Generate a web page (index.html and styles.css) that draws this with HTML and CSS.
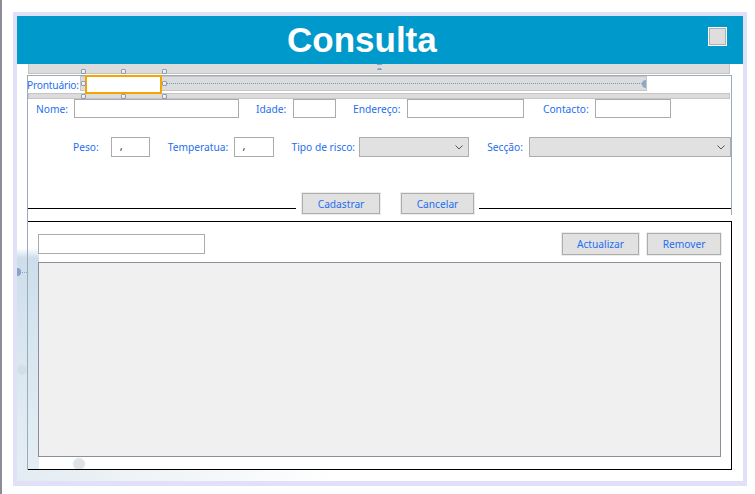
FILE: index.html
```html
<!DOCTYPE html>
<html lang="pt">
<head>
<meta charset="utf-8">
<title>Consulta</title>
<link rel="stylesheet" href="styles.css">
</head>
<body>
<div class="page">
  <div class="frame">
    <div class="inner">
      <span class="side-anchor"></span>
      <header class="header">
        <h1 class="title">Consulta</h1>
        <span class="check"></span>
      </header>
      <div class="topbar"><span class="top-marker"></span></div>
      <div class="designer">
        <section class="form">
          <div class="pront-row">
            <span class="lbl pront-label">Prontuário:</span>
            <div class="strip">
              <div class="sel-input">
                <div class="handles">
                  <span class="h h1"></span><span class="h h2"></span><span class="h h3"></span>
                  <span class="h h4"></span><span class="h h5"></span>
                  <span class="h h6"></span><span class="h h7"></span><span class="h h8"></span>
                </div>
              </div>
              <span class="dotline"></span>
              <span class="knob"></span>
            </div>
          </div>
          <div class="thinbar"></div>

          <div class="row row1">
            <span class="lbl w-nome">Nome:</span>
            <div class="tb w-nome-in"></div>
            <span class="lbl gap17 w-idade">Idade:</span>
            <div class="tb w-idade-in"></div>
            <span class="lbl gap17 w-end">Endereço:</span>
            <div class="tb w-end-in"></div>
            <span class="lbl gap19 w-cont">Contacto:</span>
            <div class="tb w-cont-in"></div>
          </div>

          <div class="row row2">
            <span class="lbl w-peso">Peso:</span>
            <div class="tb w-peso-in"><span class="comma">,</span></div>
            <span class="lbl gap18 w-temp">Temperatua:</span>
            <div class="tb w-temp-in"><span class="comma">,</span></div>
            <span class="lbl gap18 w-risco">Tipo de risco:</span>
            <div class="combo w-risco-in"><svg class="chev" width="8" height="5" viewBox="0 0 8 5"><path d="M0.5 0.5 L4 4 L7.5 0.5" fill="none" stroke="#555" stroke-width="1"/></svg></div>
            <span class="lbl gap18 w-sec">Secção:</span>
            <div class="combo w-sec-in"><svg class="chev" width="8" height="5" viewBox="0 0 8 5"><path d="M0.5 0.5 L4 4 L7.5 0.5" fill="none" stroke="#555" stroke-width="1"/></svg></div>
          </div>

          <div class="row row3">
            <span class="rule rule-left"></span>
            <button class="btn btn-cad">Cadastrar</button>
            <button class="btn btn-can">Cancelar</button>
            <span class="rule rule-right"></span>
          </div>
        </section>

        <section class="box">
          <div class="box-top">
            <div class="tb search"></div>
            <div class="box-actions">
              <button class="btn btn-act">Actualizar</button>
              <button class="btn btn-rem">Remover</button>
            </div>
          </div>
          <div class="grid"></div>
        </section>
      </div>
    </div>
  </div>
</div>
</body>
</html>
```

FILE: styles.css
```css
* { box-sizing: border-box; }

html, body {
  margin: 0;
  padding: 0;
  background: #ffffff;
}

body {
  font-family: "Noto Sans", "DejaVu Sans", sans-serif;
  font-size: 10.2px;
}

.page {
  width: 755px;
  height: 494px;
  border-left: 2px solid #8b8c98;
  padding: 12px 0 0 11px;
}

.frame {
  width: 734px;
  height: 474px;
  border-style: solid;
  border-color: #e0e0f9;
  border-width: 4px 4px 5px 4px;
}

.inner {
  position: relative;
  width: 726px;
  height: 465px;
  background-color: #ffffff;
  background-image:
    radial-gradient(circle at 62px 448px, #dde3e7 0, #dde3e7 5px, rgba(221,227,231,0) 7px),
    radial-gradient(circle at 5px 354px, #d2dfe8 0, #d2dfe8 4px, rgba(210,223,232,0) 6px),
    linear-gradient(to right, #e3ecf2 0, #ffffff 320px),
    linear-gradient(to bottom, rgba(255,255,255,0) 0, rgba(255,255,255,0) 232px, #cddeea 242px, #d8e6ef 330px, #e6eef4 465px);
  background-repeat: no-repeat;
  background-size: auto, auto, 100% 12px, 22px 465px;
  background-position: 0 0, 0 0, 0 453px, 0 0;
}

.side-anchor {
  position: absolute;
  left: 0;
  top: 252px;
  width: 10px;
  height: 8px;
  background: radial-gradient(circle at 0 4px, #8ba3c4 0, #8ba3c4 4px, rgba(0,0,0,0) 4.5px);
}
.side-anchor::after {
  content: "";
  position: absolute;
  left: 5px;
  top: 4px;
  width: 5px;
  border-top: 1px dotted #8ba3c4;
}

/* Header */
.header {
  height: 48px;
  background: #0099cc;
  display: flex;
  align-items: center;
}

.title {
  margin: 0 0 0 270px;
  font-family: "Liberation Sans", Arial, sans-serif;
  font-weight: bold;
  font-size: 35px;
  line-height: 40px;
  color: #ffffff;
}

.check {
  margin-left: auto;
  margin-right: 16px;
  align-self: flex-start;
  margin-top: 11px;
  width: 19px;
  height: 19px;
  border: 1px solid #ffffff;
  box-shadow: inset 0 0 0 1px #b0b0b0;
  background: #dedede;
}

/* design-time bars */
.topbar {
  position: relative;
  margin-left: 11px;
  width: 702px;
  height: 10px;
  background: #dcdcdc;
  border: 1px solid #c4c4c4;
  border-top: none;
}

.top-marker {
  position: absolute;
  left: 348px;
  top: 0;
  width: 5px;
  height: 6px;
  background: radial-gradient(circle at 2.5px 5px, #8ba3c4 0, #8ba3c4 2px, rgba(0,0,0,0) 2.5px);
  border-top: 1px dotted #8ba3c4;
}

.designer {
  margin-top: 1px;
  margin-left: 10px;
  width: 705px;
  border-left: 1px solid #9aacbc;
}

.form {
  border-top: 1px solid #9aacbc;
  border-right: 1px solid #9aacbc;
  padding-bottom: 1px;
}

.lbl {
  color: #1e6ef2;
  white-space: nowrap;
  line-height: 14px;
}

.pront-row {
  display: flex;
  height: 17px;
}

.pront-label {
  width: 53px;
  margin-left: -1px;
  line-height: 17px;
  padding-top: 1px;
  letter-spacing: -0.2px;
}

.strip {
  width: 567px;
  height: 15px;
  background: #dcdcdc;
  border: 1px solid #c6c6c6;
  display: flex;
  align-items: center;
}

.sel-input {
  position: relative;
  align-self: flex-start;
  margin-top: -2px;
  margin-left: 4px;
  width: 77px;
  height: 19px;
  background: #ffffff;
  border: 2px solid #f5a500;
  flex: none;
}

.handles {
  position: absolute;
  left: -6px;
  top: -8px;
  width: 86px;
  height: 31px;
}

.h {
  position: absolute;
  width: 5px;
  height: 5px;
  border: 1px solid #8f9cb0;
  border-radius: 1px;
  background: linear-gradient(135deg, #ffffff, #d8dde6);
}
.h1 { left: 0; top: 0; }
.h2 { left: 40px; top: 0; }
.h3 { left: 81px; top: 0; }
.h4 { left: 0; top: 12px; }
.h5 { left: 81px; top: 12px; }
.h6 { left: 0; top: 25px; }
.h7 { left: 40px; top: 25px; }
.h8 { left: 81px; top: 25px; }

.dotline {
  flex: 1;
  margin-left: 4px;
  border-top: 1px dotted #7396c2;
  height: 0;
}

.knob {
  flex: none;
  width: 4px;
  height: 8px;
  border-radius: 4px 0 0 4px;
  background: #8ea8c6;
}

.thinbar {
  width: 702px;
  height: 6px;
  background: #dcdcdc;
  border: 1px solid #c6c6c6;
}

/* rows */
.row {
  display: flex;
  align-items: center;
}

.row1 { height: 19px; }
.row2 { height: 20px; margin-top: 19px; }
.row3 { height: 21px; margin-top: 36px; align-items: flex-start; }

.tb {
  height: 19px;
  background: #ffffff;
  border: 1px solid #ababab;
  flex: none;
}

.row2 .tb { height: 20px; }

.gap17 { margin-left: 17px; }
.gap18 { margin-left: 18px; }
.gap19 { margin-left: 19px; }

.w-nome { margin-left: 8px; width: 38px; }
.w-nome-in { width: 165px; }
.w-idade { width: 37px; }
.w-idade-in { width: 43px; }
.w-end { width: 54px; }
.w-end-in { width: 117px; }
.w-cont { width: 52px; }
.w-cont-in { width: 76px; }

.w-peso { margin-left: 45px; width: 38px; }
.w-peso-in { width: 39px; }
.w-temp { width: 66px; }
.w-temp-in { width: 40px; }
.w-risco { width: 68px; }
.w-risco-in { width: 110px; }
.w-sec { width: 42px; }
.w-sec-in { width: 202px; }

.comma {
  display: block;
  padding-left: 8px;
  line-height: 16px;
  font-size: 11px;
  color: #333;
}

.combo {
  flex: none;
  height: 20px;
  background: #e1e1e1;
  border: 1px solid #adadad;
  display: flex;
  align-items: center;
  justify-content: flex-end;
  padding-right: 5px;
}

.chev { display: block; margin-top: 1px; }

.rule {
  height: 0;
  border-top: 1px solid #000000;
  margin-top: 15px;
}
.rule-left { width: 268px; }
.rule-right { flex: 1; margin-left: 5px; }

.btn {
  font-family: "Noto Sans", "DejaVu Sans", sans-serif;
  font-size: 10.2px;
  color: #1e6ef2;
  background: #e1e1e1;
  border: 1px solid #adadad;
  box-shadow: 0 0 0 1px #ececec;
  padding: 0;
  margin: 0;
  line-height: 14px;
}

.btn-cad { width: 78px; height: 21px; margin-left: 6px; }
.btn-can { width: 73px; height: 21px; margin-left: 21px; }

/* lower box */
.box {
  margin-top: 6px;
  height: 249px;
  border-top: 1px solid #000000;
  border-right: 1px solid #000000;
  border-bottom: 1px solid #000000;
  padding: 11px 10px 0 10px;
}

.box-top {
  display: flex;
  justify-content: space-between;
  align-items: flex-start;
}

.search {
  margin-top: 1px;
  width: 167px;
  height: 20px;
}

.box-actions {
  display: flex;
  gap: 8px;
}

.btn-act { width: 77px; height: 22px; }
.btn-rem { width: 74px; height: 22px; }

.grid {
  margin-top: 7px;
  height: 195px;
  background: #f0f0f0;
  border: 1px solid #8c8f9b;
}
```
